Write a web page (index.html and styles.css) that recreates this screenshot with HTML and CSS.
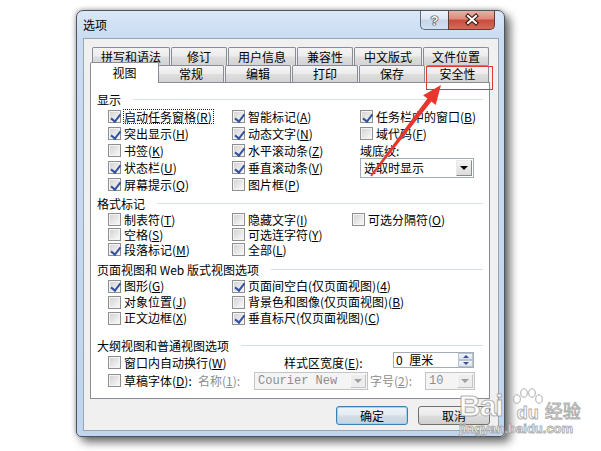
FILE: index.html
```html
<!DOCTYPE html>
<html lang="zh-CN">
<head>
<meta charset="utf-8">
<title>选项</title>
<link rel="stylesheet" href="styles.css">
</head>
<body>
<div class="window">
  <div class="titlebar">
    <span class="title">选项</span>
    <div class="capbtns">
      <div class="capbtn help"><span>?</span></div>
      <div class="capbtn close">
        <svg width="46" height="18" viewBox="0 0 46 18"><path d="M19 5 L27 12 M27 5 L19 12" stroke="#3a1a16" stroke-width="4.2" stroke-linecap="square" fill="none"/><path d="M19 5 L27 12 M27 5 L19 12" stroke="#fff" stroke-width="2" stroke-linecap="square" fill="none"/></svg>
      </div>
    </div>
  </div>
  <div class="client">
    <div class="tabctl">
      <div class="tabrow row1">
        <div class="tab t78">拼写和语法</div>
        <div class="tab t56">修订</div>
        <div class="tab t68">用户信息</div>
        <div class="tab t56">兼容性</div>
        <div class="tab t68">中文版式</div>
        <div class="tab t66">文件位置</div>
      </div>
      <div class="tabrow row2">
        <div class="tab t65 sel">视图</div>
        <div class="tab t66">常规</div>
        <div class="tab t66">编辑</div>
        <div class="tab t66">打印</div>
        <div class="tab t66">保存</div>
        <div class="tab t63">安全性</div>
      </div>
      <div class="panel">
        <div class="sec-head"><span>显示</span></div>
        <div class="grid g-disp">
          <div class="cbitem"><span class="cb on"></span><span class="focus">启动任务窗格(<u>R</u>)</span></div>
          <div class="cbitem"><span class="cb on"></span><span>智能标记(<u>A</u>)</span></div>
          <div class="cbitem"><span class="cb on"></span><span>任务栏中的窗口(<u>B</u>)</span></div>

          <div class="cbitem"><span class="cb on"></span><span>突出显示(<u>H</u>)</span></div>
          <div class="cbitem"><span class="cb on"></span><span>动态文字(<u>N</u>)</span></div>
          <div class="cbitem"><span class="cb"></span><span>域代码(<u>F</u>)</span></div>

          <div class="cbitem"><span class="cb"></span><span>书签(<u>K</u>)</span></div>
          <div class="cbitem"><span class="cb on"></span><span>水平滚动条(<u>Z</u>)</span></div>
          <div class="plain">域底纹:</div>

          <div class="cbitem"><span class="cb on"></span><span>状态栏(<u>U</u>)</span></div>
          <div class="cbitem"><span class="cb on"></span><span>垂直滚动条(<u>V</u>)</span></div>
          <div class="combo shade"><span class="combo-text">选取时显示</span><span class="dd-btn"><span class="tri-down"></span></span></div>

          <div class="cbitem"><span class="cb on"></span><span>屏幕提示(<u>Q</u>)</span></div>
          <div class="cbitem"><span class="cb"></span><span>图片框(<u>P</u>)</span></div>
          <div></div>
        </div>

        <div class="sec-head s-fmt"><span>格式标记</span></div>
        <div class="grid g-fmt">
          <div class="cbitem"><span class="cb"></span><span>制表符(<u>T</u>)</span></div>
          <div class="cbitem"><span class="cb"></span><span>隐藏文字(<u>I</u>)</span></div>
          <div class="cbitem"><span class="cb"></span><span>可选分隔符(<u>O</u>)</span></div>

          <div class="cbitem"><span class="cb"></span><span>空格(<u>S</u>)</span></div>
          <div class="cbitem"><span class="cb"></span><span>可选连字符(<u>Y</u>)</span></div>
          <div></div>

          <div class="cbitem"><span class="cb on"></span><span>段落标记(<u>M</u>)</span></div>
          <div class="cbitem"><span class="cb"></span><span>全部(<u>L</u>)</span></div>
          <div></div>
        </div>

        <div class="sec-head s-page"><span>页面视图和 Web 版式视图选项</span></div>
        <div class="grid g-page">
          <div class="cbitem"><span class="cb on"></span><span>图形(<u>G</u>)</span></div>
          <div class="cbitem"><span class="cb on"></span><span>页面间空白(仅页面视图)(<u>4</u>)</span></div>

          <div class="cbitem"><span class="cb"></span><span>对象位置(<u>J</u>)</span></div>
          <div class="cbitem"><span class="cb"></span><span>背景色和图像(仅页面视图)(<u>B</u>)</span></div>

          <div class="cbitem"><span class="cb"></span><span>正文边框(<u>X</u>)</span></div>
          <div class="cbitem"><span class="cb on"></span><span>垂直标尺(仅页面视图)(<u>C</u>)</span></div>
        </div>

        <div class="sec-head s-out"><span>大纲视图和普通视图选项</span></div>
        <div class="orow orow1">
          <div class="cbitem w-wrap"><span class="cb"></span><span>窗口内自动换行(<u>W</u>)</span></div>
          <div class="plain w-style">样式区宽度(<u>E</u>):</div>
          <div class="spin"><span class="spin-text">0 厘米</span><span class="spin-btns"><span class="sb up"><span class="tri-up"></span></span><span class="sb down"><span class="tri-dn"></span></span></span></div>
        </div>
        <div class="orow orow2">
          <div class="cbitem w-draft"><span class="cb"></span><span>草稿字体(<u>D</u>):</span></div>
          <div class="plain dis w-name">名称(<u>1</u>):</div>
          <div class="combo disabled c-font"><span class="combo-text mono">Courier New</span><span class="dd-btn"><span class="tri-down"></span></span></div>
          <div class="plain dis w-size">字号(<u>2</u>):</div>
          <div class="combo disabled c-size"><span class="combo-text mono">10</span><span class="dd-btn"><span class="tri-down"></span></span></div>
        </div>
      </div>
    </div>
    <div class="btnrow">
      <div class="btn default">确定</div>
      <div class="btn">取消</div>
    </div>
  </div>
</div>

<div class="redbox"></div>
<svg class="arrow" width="601" height="451" viewBox="0 0 601 451">
  <polygon points="370.2,175.4 427.4,98.6 423.1,95.2 441,85 435.7,105 431.4,101.6 371.8,176.6" fill="#e8362f"/>
</svg>

<div class="wm">
  <div class="wm-top">
    <span class="wm-bai">Bai</span>
    <span class="wm-paw">
      <svg class="toes" width="30" height="18" viewBox="0 0 30 18"><ellipse cx="4" cy="11" rx="3.3" ry="4.2"/><ellipse cx="11" cy="5" rx="3.3" ry="4.2"/><ellipse cx="19" cy="5" rx="3.3" ry="4.2"/><ellipse cx="26" cy="11" rx="3.3" ry="4.2"/></svg>
      <span class="wm-du">du</span>
    </span>
    <span class="wm-jy">经验</span>
  </div>
  <div class="wm-url">jingyan.baidu.com</div>
</div>
</body>
</html>
```
FILE: styles.css
```css
* { box-sizing: border-box; }
html, body { margin: 0; padding: 0; }
body {
  width: 601px; height: 451px; overflow: hidden; position: relative;
  background: #fff;
  font-family: "Noto Sans CJK SC", "Noto Sans", sans-serif;
  font-size: 12px; color: #000;
}
u { text-decoration: underline; text-underline-offset: 1px; }

/* window frame */
.window {
  position: absolute; left: 76px; top: 10px;
  width: 429px; height: 427px;
  border: 1px solid #4e5561;
  border-radius: 7px 7px 5px 5px;
  background: linear-gradient(180deg, #d9e7f8 0, #cadcf2 27px, #c0d5ee 100%);
  box-shadow: 5px 5px 10px rgba(0,0,0,.6), -1px -1px 4px rgba(0,0,0,.25);
  display: flex; flex-direction: column;
  padding: 0 5px 5px 6px;
}
.titlebar { height: 27px; flex: none; display: flex; align-items: flex-start; }
.title { line-height: 27px; font-size: 12px; }
.capbtns { margin-left: auto; margin-right: 4px; display: flex; }
.capbtn { height: 19px; }
.help {
  width: 28px;
  border: 1px solid #5d6b80; border-top: none; border-right: none;
  border-radius: 0 0 0 5px;
  background: linear-gradient(#eef3fa, #dce6f2 45%, #c6d5e9 50%, #d2e0f1);
  display: flex; align-items: center; justify-content: center;
}
.help span {
  font-family: "Liberation Sans", sans-serif; font-weight: bold; font-size: 13px;
  color: #fff; line-height: 1;
  text-shadow: 0 0 1px #222, 0 0 1px #222, 0 0 1px #222, 0 0 1px #222;
}
.close {
  width: 47px;
  border: 1px solid #5d3b37; border-top: none;
  border-radius: 0 0 5px 0;
  background: linear-gradient(#eab0a6, #dc8878 45%, #c94b3c 50%, #d66b58);
}
.close svg { display: block; }

/* client area */
.client {
  flex: 1; background: #f0f0f0;
  border: 1px solid #9aa5b3;
  padding: 8px 8px 0 6px;
  display: flex; flex-direction: column;
}
.tabctl { width: 400px; }
.tabrow { display: flex; gap: 1px; padding: 0 1px 0 2px; }
.row1 { height: 18px; }
.row2 { height: 17px; }
.tab {
  flex: none;
  border: 1px solid #898c95; border-bottom: none;
  border-radius: 2px 2px 0 0;
  background: linear-gradient(#f4f4f4, #ececec 48%, #dedede 52%, #d3d3d3);
  display: flex; align-items: center; justify-content: center;
  white-space: nowrap; line-height: 14px;
}
.t78 { width: 78px; } .t56 { width: 56px; } .t68 { width: 68px; }
.t66 { width: 66px; } .t65 { width: 65px; } .t63 { width: 63px; }
.tab.sel {
  width: 69px; height: 21px;
  margin: -3px -2px 0 -2px;
  background: #fff;
  position: relative; z-index: 2;
}

.panel {
  width: 400px; height: 317px;
  border: 1px solid #898c95; background: #fff;
  padding: 8px 6px 0 6px;
}
.sec-head {
  display: flex; align-items: center; gap: 12px;
  height: 17px; line-height: 17px; white-space: nowrap;
}
.sec-head::after { content: ""; flex: 1; border-top: 1px solid #d5dfe5; }
.s-fmt { margin-top: 2px; }
.s-page { margin-top: 4px; }
.s-out { margin-top: 11px; }

.grid { display: grid; margin-left: 11px; align-items: center; }
.g-disp { grid-template-columns: 124px 128px 1fr; grid-auto-rows: 17px; }
.g-fmt { grid-template-columns: 124px 120px 1fr; grid-auto-rows: 15px; }
.g-fmt .cbitem { line-height: 13px; }
.g-page { grid-template-columns: 124px 1fr; grid-auto-rows: 16px; }
.g-page .cbitem { line-height: 14px; }

.cbitem { display: flex; align-items: center; gap: 3px; white-space: nowrap; line-height: 15px; }
.plain { white-space: nowrap; line-height: 15px; }
.dis { color: #8d8d8d; }

.cb {
  flex: none; position: relative;
  width: 13px; height: 13px;
  border: 1px solid #8e8f8f;
  background: linear-gradient(135deg, #d0d0d0 0%, #e8e8e8 55%, #fbfbfb 100%);
  box-shadow: inset 0 0 0 1px #f4f4f4;
}
.cb.on::after {
  content: ""; position: absolute;
  left: 3.5px; top: 0.5px; width: 3.5px; height: 7.5px;
  border: solid #3552a0; border-width: 0 2px 2px 0;
  transform: rotate(38deg);
}
.focus { border: 1px dotted #222; line-height: 13px; margin-left: -1px; padding-right: 1px; }

/* combos */
.combo {
  display: flex; align-items: center; justify-content: space-between;
  border: 1px solid #a5acb5; background: #fff;
  padding: 1px;
}
.shade { width: 114px; height: 20px; }
.combo-text { padding-left: 2px; line-height: 16px; white-space: nowrap; }
.dd-btn {
  width: 16px; height: 100%;
  border: 1px solid #a0a0a0;
  border-color: #e9e9e9 #8a8a8a #8a8a8a #e9e9e9;
  background: linear-gradient(#f3f3f3, #dcdcdc);
  display: flex; align-items: center; justify-content: center;
}
.tri-down { width: 0; height: 0; border-left: 4px solid transparent; border-right: 4px solid transparent; border-top: 4px solid #000; }
.disabled { border-color: #c2c5ca; background: #f4f4f4; }
.disabled .combo-text { color: #8d8d8d; }
.disabled .dd-btn { background: #ededed; border-color: #f8f8f8 #c4c4c4 #c4c4c4 #f8f8f8; }
.disabled .tri-down { border-top-color: #a0a0a0; }
.mono { font-family: "Liberation Mono", monospace; font-size: 12px; }

/* outline rows */
.orow { display: flex; align-items: center; margin-left: 11px; }
.orow1 { height: 17px; }
.orow2 { height: 19px; }
.w-wrap { width: 176px; }
.w-style { width: 109px; }
.spin {
  width: 81px; height: 16px; margin-bottom: 5px;
  border: 1px solid #a5acb5; background: #fff;
  display: flex; align-items: center; justify-content: space-between;
}
.spin-text { padding-left: 2px; line-height: 14px; word-spacing: 4px; white-space: pre; }
.spin-btns { display: flex; flex-direction: column; width: 15px; height: 14px; }
.sb {
  flex: 1; display: flex; align-items: center; justify-content: center;
  border: 1px solid #b9c4d3;
  background: linear-gradient(#f1f5fb, #d9e2ee);
}
.tri-up { width: 0; height: 0; border-left: 3px solid transparent; border-right: 3px solid transparent; border-bottom: 3px solid #3c5089; }
.tri-dn { width: 0; height: 0; border-left: 3px solid transparent; border-right: 3px solid transparent; border-top: 3px solid #3c5089; }
.w-draft { width: 90px; }
.w-name { width: 56px; }
.c-font { width: 114px; height: 18px; }
.w-size { width: 55px; margin-left: 2px; }
.c-size { width: 50px; height: 18px; }

/* buttons */
.btnrow { display: flex; justify-content: flex-end; gap: 10px; margin-top: 7px; }
.btn {
  width: 72px; height: 19px;
  border: 1px solid #707070; border-radius: 3px;
  background: linear-gradient(#f2f2f2, #ebebeb 48%, #dddddd 52%, #cfcfcf);
  display: flex; align-items: center; justify-content: center;
  line-height: 15px;
}
.btn.default {
  border-color: #3c7fb1;
  box-shadow: inset 0 0 0 1px #9fd3f5;
  background: linear-gradient(#eef4f8, #e4ecf2 48%, #d4dde5 52%, #c8d3dc);
}

/* annotations */
.redbox {
  position: absolute; left: 426px; top: 66px; width: 67px; height: 24px;
  border: 1px solid #e53935;
}
.arrow { position: absolute; left: 0; top: 0; pointer-events: none; }

/* watermark */
.wm {
  position: absolute; left: 459px; top: 385px;
  color: rgba(255,255,255,.92);
  -webkit-text-stroke: 1px rgba(150,150,150,.75);
  font-family: "Liberation Sans", sans-serif; font-weight: bold;
  pointer-events: none;
}
.wm-top { display: flex; align-items: flex-end; height: 36px; }
.wm-bai { font-size: 30px; line-height: 30px; letter-spacing: -1px; }
.wm-paw { position: relative; display: flex; flex-direction: column; align-items: center; margin-left: 10px; }
.toes { display: block; fill: rgba(255,255,255,.92); stroke: rgba(150,150,150,.75); stroke-width: 1; }
.wm-du { font-size: 18px; line-height: 16px; margin-top: -1px; }
.wm-jy { font-family: "Noto Sans CJK SC", sans-serif; font-weight: normal; font-size: 18px; line-height: 22px; margin-left: 2px; }
.wm-url { font-size: 13px; line-height: 14px; margin-top: 1px; }
```
